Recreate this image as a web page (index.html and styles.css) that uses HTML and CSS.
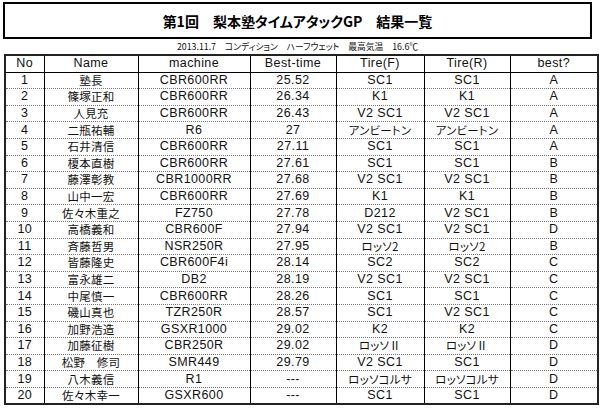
FILE: index.html
```html
<!DOCTYPE html>
<html lang="ja">
<head>
<meta charset="utf-8">
<link rel="stylesheet" href="styles.css">
</head>
<body>
<div class="page">
  <header class="title-box"><h1 class="title">第1回　梨本塾タイムアタックGP　結果一覧</h1></header>
  <p class="subtitle">2013.11.7　コンディション　ハーフウェット　最高気温　16.6℃</p>
  <table class="results">
    <colgroup>
      <col class="c-no"><col class="c-name"><col class="c-mach"><col class="c-time"><col class="c-tf"><col class="c-tr"><col class="c-best">
    </colgroup>
    <thead>
      <tr><th>No</th><th>Name</th><th>machine</th><th>Best-time</th><th>Tire(F)</th><th>Tire(R)</th><th>best?</th></tr>
    </thead>
    <tbody>
      <tr><td>1</td><td class="jp">塾長</td><td>CBR600RR</td><td>25.52</td><td>SC1</td><td>SC1</td><td>A</td></tr>
      <tr><td>2</td><td class="jp">篠塚正和</td><td>CBR600RR</td><td>26.34</td><td>K1</td><td>K1</td><td>A</td></tr>
      <tr><td>3</td><td class="jp">人見充</td><td>CBR600RR</td><td>26.43</td><td>V2 SC1</td><td>V2 SC1</td><td>A</td></tr>
      <tr><td>4</td><td class="jp">二瓶祐輔</td><td>R6</td><td>27</td><td class="jp">アンビートン</td><td class="jp">アンビートン</td><td>A</td></tr>
      <tr><td>5</td><td class="jp">石井清信</td><td>CBR600RR</td><td>27.11</td><td>SC1</td><td>SC1</td><td>A</td></tr>
      <tr><td>6</td><td class="jp">榎本直樹</td><td>CBR600RR</td><td>27.61</td><td>SC1</td><td>SC1</td><td>B</td></tr>
      <tr><td>7</td><td class="jp">藤澤彰教</td><td>CBR1000RR</td><td>27.68</td><td>V2 SC1</td><td>V2 SC1</td><td>B</td></tr>
      <tr><td>8</td><td class="jp">山中一宏</td><td>CBR600RR</td><td>27.69</td><td>K1</td><td>K1</td><td>B</td></tr>
      <tr><td>9</td><td class="jp">佐々木重之</td><td>FZ750</td><td>27.78</td><td>D212</td><td>V2 SC1</td><td>B</td></tr>
      <tr><td>10</td><td class="jp">高橋義和</td><td>CBR600F</td><td>27.94</td><td>V2 SC1</td><td>V2 SC1</td><td>D</td></tr>
      <tr><td>11</td><td class="jp">斉藤哲男</td><td>NSR250R</td><td>27.95</td><td class="jp">ロッソ2</td><td class="jp">ロッソ2</td><td>B</td></tr>
      <tr><td>12</td><td class="jp">皆藤隆史</td><td>CBR600F4i</td><td>28.14</td><td>SC2</td><td>SC2</td><td>C</td></tr>
      <tr><td>13</td><td class="jp">富永雄二</td><td>DB2</td><td>28.19</td><td>V2 SC1</td><td>V2 SC1</td><td>C</td></tr>
      <tr><td>14</td><td class="jp">中尾慎一</td><td>CBR600RR</td><td>28.26</td><td>SC1</td><td>SC1</td><td>C</td></tr>
      <tr><td>15</td><td class="jp">磯山真也</td><td>TZR250R</td><td>28.57</td><td>SC1</td><td>V2 SC1</td><td>C</td></tr>
      <tr><td>16</td><td class="jp">加野浩造</td><td>GSXR1000</td><td>29.02</td><td>K2</td><td>K2</td><td>C</td></tr>
      <tr><td>17</td><td class="jp">加藤征樹</td><td>CBR250R</td><td>29.02</td><td class="jp">ロッソⅡ</td><td class="jp">ロッソⅡ</td><td>D</td></tr>
      <tr><td>18</td><td class="jp">松野　修司</td><td>SMR449</td><td>29.79</td><td>V2 SC1</td><td>SC1</td><td>D</td></tr>
      <tr><td>19</td><td class="jp">八木義信</td><td>R1</td><td>---</td><td class="jp">ロッソコルサ</td><td class="jp">ロッソコルサ</td><td>D</td></tr>
      <tr><td>20</td><td class="jp">佐々木幸一</td><td>GSXR600</td><td>---</td><td>SC1</td><td>SC1</td><td>D</td></tr>
    </tbody>
  </table>
</div>
</body>
</html>
```

FILE: styles.css
```css
html, body {
  margin: 0;
  padding: 0;
  background: #ffffff;
}

body {
  width: 600px;
  height: 410px;
  overflow: hidden;
  font-family: "Liberation Sans", "Noto Sans CJK JP", sans-serif;
  color: #111;
}

.page {
  padding: 2px 8px 0 3px;
  display: flex;
  flex-direction: column;
}

.title-box {
  border: 2px solid #000;
  height: 33px;
  display: flex;
  align-items: center;
  justify-content: center;
  width: 585px;
}

.title {
  margin: 0;
  font-family: "Noto Sans CJK JP", sans-serif;
  font-feature-settings: "palt";
  font-size: 14px;
  font-weight: bold;
  letter-spacing: 0;
  line-height: 1;
  color: #000;
}

.subtitle {
  margin: 0;
  height: 15px;
  line-height: 15px;
  text-align: center;
  font-family: "Noto Sans CJK JP", sans-serif;
  font-feature-settings: "palt";
  font-size: 8.8px;
  letter-spacing: 0;
  width: 589px;
}

.results {
  margin-left: 1px;
  border-collapse: collapse;
  table-layout: fixed;
  width: 593px;
  border: 2px solid #222;
  font-size: 12.5px;
  letter-spacing: 0.4px;
}

.c-no { width: 39px; }
.c-name { width: 94px; }
.c-mach { width: 112px; }
.c-time { width: 86px; }
.c-tf { width: 88px; }
.c-tr { width: 86px; }
.c-best { width: 88px; }

.results tr {
  height: 16.6px;
}

.results th,
.results td {
  height: 15.6px;
  padding: 0;
  text-align: center;
  vertical-align: middle;
  line-height: 13px;
  font-weight: normal;
  border-left: 1px solid #000;
  border-right: 1px solid #000;
  border-bottom: 1px dotted #777;
  white-space: nowrap;
  overflow: hidden;
}

.results th {
  border-bottom: 1px solid #000;
}

.results .jp {
  font-family: "Noto Sans CJK JP", sans-serif;
  font-feature-settings: "palt";
  font-size: 11.5px;
  letter-spacing: 0.2px;
}
```
